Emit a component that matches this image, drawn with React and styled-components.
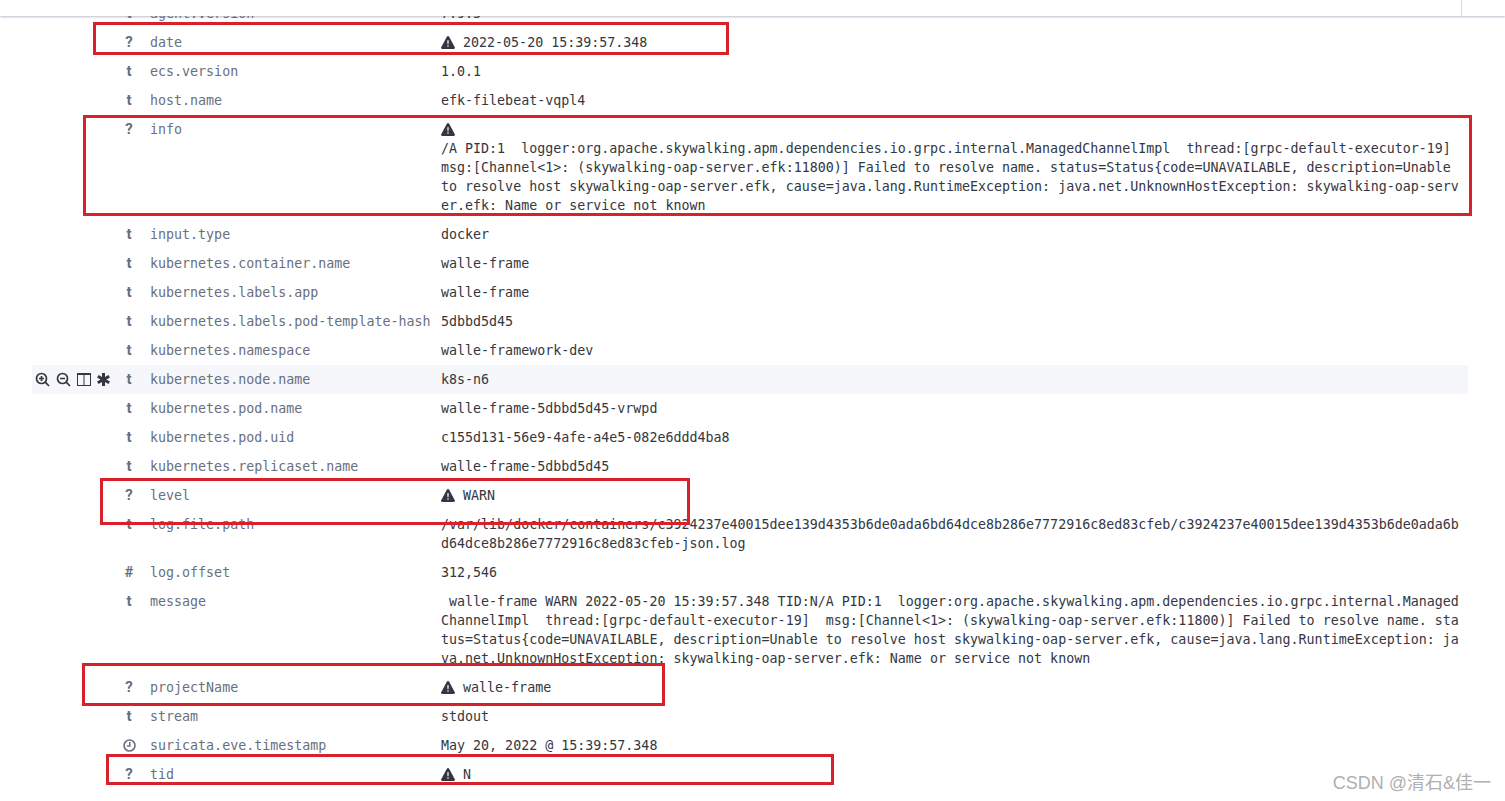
import React from "react";
import styled, { createGlobalStyle } from "styled-components";

const rows = [
  { type: "t", name: "agent.version", value: "7.9.3" },
  { type: "?", name: "date", value: "2022-05-20 15:39:57.348", warn: true },
  { type: "t", name: "ecs.version", value: "1.0.1" },
  { type: "t", name: "host.name", value: "efk-filebeat-vqpl4" },
  {
    type: "?",
    name: "info",
    warn: true,
    block: true,
    value:
      "/A PID:1  logger:org.apache.skywalking.apm.dependencies.io.grpc.internal.ManagedChannelImpl  thread:[grpc-default-executor-19] msg:[Channel<1>: (skywalking-oap-server.efk:11800)] Failed to resolve name. status=Status{code=UNAVAILABLE, description=Unable to resolve host skywalking-oap-server.efk, cause=java.lang.RuntimeException: java.net.UnknownHostException: skywalking-oap-server.efk: Name or service not known",
  },
  { type: "t", name: "input.type", value: "docker" },
  { type: "t", name: "kubernetes.container.name", value: "walle-frame" },
  { type: "t", name: "kubernetes.labels.app", value: "walle-frame" },
  { type: "t", name: "kubernetes.labels.pod-template-hash", value: "5dbbd5d45" },
  { type: "t", name: "kubernetes.namespace", value: "walle-framework-dev" },
  { type: "t", name: "kubernetes.node.name", value: "k8s-n6", hovered: true },
  { type: "t", name: "kubernetes.pod.name", value: "walle-frame-5dbbd5d45-vrwpd" },
  { type: "t", name: "kubernetes.pod.uid", value: "c155d131-56e9-4afe-a4e5-082e6ddd4ba8" },
  { type: "t", name: "kubernetes.replicaset.name", value: "walle-frame-5dbbd5d45" },
  { type: "?", name: "level", value: "WARN", warn: true },
  {
    type: "t",
    name: "log.file.path",
    value:
      "/var/lib/docker/containers/c3924237e40015dee139d4353b6de0ada6bd64dce8b286e7772916c8ed83cfeb/c3924237e40015dee139d4353b6de0ada6bd64dce8b286e7772916c8ed83cfeb-json.log",
  },
  { type: "#", name: "log.offset", value: "312,546" },
  {
    type: "t",
    name: "message",
    value:
      " walle-frame WARN 2022-05-20 15:39:57.348 TID:N/A PID:1  logger:org.apache.skywalking.apm.dependencies.io.grpc.internal.ManagedChannelImpl  thread:[grpc-default-executor-19]  msg:[Channel<1>: (skywalking-oap-server.efk:11800)] Failed to resolve name. status=Status{code=UNAVAILABLE, description=Unable to resolve host skywalking-oap-server.efk, cause=java.lang.RuntimeException: java.net.UnknownHostException: skywalking-oap-server.efk: Name or service not known",
  },
  { type: "?", name: "projectName", value: "walle-frame", warn: true },
  { type: "t", name: "stream", value: "stdout" },
  { type: "clock", name: "suricata.eve.timestamp", value: "May 20, 2022 @ 15:39:57.348" },
  { type: "?", name: "tid", value: "N", warn: true },
];

const marks = [
  { left: 93, top: 22, width: 636, height: 33 },
  { left: 83, top: 115, width: 1389, height: 101 },
  { left: 100, top: 478, width: 590, height: 47 },
  { left: 82, top: 663, width: 583, height: 43 },
  { left: 106, top: 754, width: 728, height: 31 },
];

const WarnIcon = () => (
  <WarnSvg viewBox="0 0 14 13">
    <path
      fillRule="evenodd"
      d="M7 0c.5 0 .8.3 1 .6l5.8 10.6c.4.8-.1 1.8-1 1.8H1.200c-.9 0-1.400-1-1-1.800L6 .6C6.200.3 6.500 0 7 0zM6.300 4.300l.2 4h1l.2-4H6.300zM7 9.200c-.5 0-.8.3-.8.8s.3.8.8.8.8-.3.8-.8-.3-.8-.8-.8z"
    />
  </WarnSvg>
);

const ClockIcon = () => (
  <svg width="13" height="13" viewBox="0 0 13 13" fill="none" stroke="#69707d">
    <circle cx="6.500" cy="6.500" r="5.500" strokeWidth="1.600" />
    <path d="M6.800 3v4H3.800" strokeWidth="1.500" />
  </svg>
);

const RowActions = () => (
  <Actions>
    <svg width="15" height="15" viewBox="0 0 15 15" fill="none" stroke="#343741" strokeWidth="1.700">
      <circle cx="6.500" cy="6.500" r="5" />
      <path d="M10.200 10.200L14 14M4 6.500h5M6.500 4v5" />
    </svg>
    <svg width="15" height="15" viewBox="0 0 15 15" fill="none" stroke="#343741" strokeWidth="1.700">
      <circle cx="6.500" cy="6.500" r="5" />
      <path d="M10.200 10.200L14 14M4 6.500h5" />
    </svg>
    <svg width="14" height="13" viewBox="0 0 14 13" fill="none" stroke="#343741">
      <rect x="0.500" y="0.500" width="13" height="12" />
      <path d="M7 .5v12M.5 1.500h13" />
    </svg>
    <svg width="13" height="13" viewBox="0 0 13 13" stroke="#343741" strokeWidth="3">
      <path d="M6.500 0v13M.8 3.200l11.400 6.600M.8 9.800l11.400-6.600" />
    </svg>
  </Actions>
);

const App = () => {
  return (
    <>
      <GlobalStyle />
      <Page>
        <TopBar>
          <TopDivider />
        </TopBar>
        <Table>
          {rows.map((row) => (
            <Row key={row.name} $hovered={row.hovered}>
              <ActionCell>{row.hovered && <RowActions />}</ActionCell>
              <TypeCell>{row.type === "clock" ? <ClockIcon /> : row.type}</TypeCell>
              <NameCell>{row.name}</NameCell>
              <ValueCell>
                {row.warn && <WarnIcon />}
                {row.warn && (row.block ? <br /> : " ")}
                {row.value}
              </ValueCell>
            </Row>
          ))}
        </Table>
        {marks.map((mark) => (
          <Mark key={mark.top} style={mark} />
        ))}
        <Watermark>CSDN @清石&amp;佳一</Watermark>
      </Page>
    </>
  );
};

const GlobalStyle = createGlobalStyle`
  html, body {
    margin: 0;
    padding: 0;
    background: #fff;
    overflow: hidden;
  }
`;

const Page = styled.div`
  position: relative;
  width: 1505px;
  height: 801px;
  overflow: hidden;
  background: #fff;
  font-family: "DejaVu Sans Mono", "Liberation Mono", monospace;
  font-size: 13.32px;
  line-height: 19px;
`;

const TopBar = styled.div`
  position: absolute;
  top: 0;
  left: 0;
  right: 0;
  height: 16px;
  background: #fff;
  box-shadow: 0 1px 2px rgba(105, 112, 140, 0.45);
  z-index: 1;
`;

const TopDivider = styled.div`
  position: absolute;
  top: 0;
  left: 1461px;
  width: 1px;
  height: 16px;
  background: #d3dae6;
`;

const Table = styled.div`
  margin: -1px 37px 0 32px;
`;

const Row = styled.div`
  display: grid;
  grid-template-columns: 84px 26px 299px 1fr;
  padding: 5px 0;
  background: ${(p) => (p.$hovered ? "#f5f7fa" : "transparent")};
`;

const ActionCell = styled.div`
  display: flex;
  align-items: center;
`;

const Actions = styled.div`
  display: flex;
  align-items: center;
  gap: 6px;
  padding-left: 3px;
`;

const TypeCell = styled.div`
  display: flex;
  align-items: center;
  justify-content: center;
  height: 19px;
  font-family: "Roboto", sans-serif;
  font-weight: 700;
  font-size: 15px;
  color: #69707d;
`;

const NameCell = styled.div`
  padding-left: 8px;
  color: #69707d;
  white-space: nowrap;
`;

const ValueCell = styled.div`
  padding-right: 7px;
  color: #343741;
  white-space: pre-wrap;
  word-break: break-all;
`;

const WarnSvg = styled.svg`
  width: 14px;
  height: 13px;
  vertical-align: -2px;
  fill: #343741;
`;

const Mark = styled.div`
  position: absolute;
  box-sizing: border-box;
  border: 3px solid #d9212c;
  z-index: 2;
`;

const Watermark = styled.div`
  position: absolute;
  right: 14px;
  bottom: 7px;
  font-family: "Liberation Sans", "Noto Sans CJK SC", sans-serif;
  font-size: 18px;
  line-height: 22px;
  color: #b0b0b0;
  z-index: 2;
`;

export default App;
